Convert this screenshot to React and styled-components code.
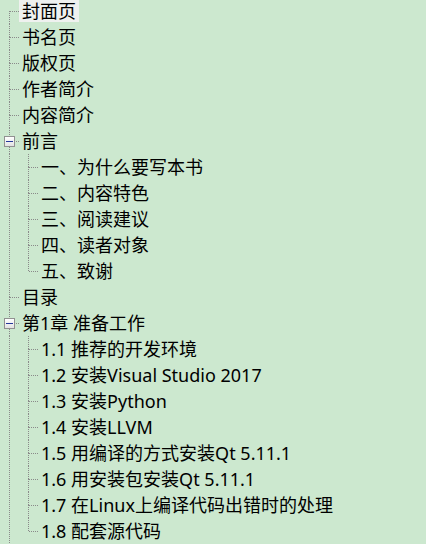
import React from "react";
import styled, { createGlobalStyle, css } from "styled-components";

const Global = createGlobalStyle`
  html, body { margin: 0; padding: 0; overflow: hidden; background: #cce8cf; }
  #root { min-height: 100vh; }
`;

const DOT = "#8a8a8a";
const vLine = `repeating-linear-gradient(to bottom, ${DOT} 0 1px, transparent 1px 2px)`;
const hLine = `repeating-linear-gradient(to right, ${DOT} 0 1px, transparent 1px 2px)`;

const Tree = styled.div`
  margin-top: -2px;
  font-family: "Noto Sans", "Noto Sans CJK SC", sans-serif;
  font-size: 18px;
  color: #000;
`;

const Row = styled.div`
  display: flex;
  align-items: center;
  height: 26px;
`;

const Indent = styled.span`
  flex: none;
  width: 19px;
  height: 100%;
  ${(p) =>
    p.$line &&
    css`
      background-image: ${vLine};
      background-repeat: no-repeat;
      background-size: 1px 100%;
      background-position: 9px 0;
    `}
`;

const connectorBg = ({ $top, $bottom }) => {
  const imgs = [];
  const sizes = [];
  const pos = [];
  if ($top) {
    imgs.push(vLine);
    sizes.push("1px 13px");
    pos.push("9px 0");
  }
  if ($bottom) {
    imgs.push(vLine);
    sizes.push("1px 13px");
    pos.push("9px 13px");
  }
  imgs.push(hLine);
  sizes.push("9px 1px");
  pos.push("10px 13px");
  return css`
    background-image: ${imgs.join(", ")};
    background-size: ${sizes.join(", ")};
    background-position: ${pos.join(", ")};
    background-repeat: no-repeat;
  `;
};

const Connector = styled.span`
  flex: none;
  width: 19px;
  height: 100%;
  display: flex;
  align-items: center;
  padding-left: 4px;
  box-sizing: border-box;
  ${connectorBg}
`;

const ToggleBox = styled.span`
  width: 11px;
  height: 11px;
  box-sizing: border-box;
  border: 1px solid #919191;
  background: linear-gradient(#ffffff, #e2e2e2);
  display: flex;
  align-items: center;
  justify-content: center;
`;

const Minus = styled.span`
  width: 7px;
  height: 1px;
  background: #24389a;
`;

const Label = styled.span`
  display: inline-block;
  height: 22px;
  line-height: 22px;
  padding: 0 3px;
  white-space: nowrap;
  background: ${(p) => (p.$selected ? "#eff1ef" : "transparent")};
`;

const data = [
  { t: "封面页", selected: true },
  { t: "书名页" },
  { t: "版权页" },
  { t: "作者简介" },
  { t: "内容简介" },
  {
    t: "前言",
    children: [
      { t: "一、为什么要写本书" },
      { t: "二、内容特色" },
      { t: "三、阅读建议" },
      { t: "四、读者对象" },
      { t: "五、致谢" },
    ],
  },
  { t: "目录" },
  {
    t: "第1章 准备工作",
    children: [
      { t: "1.1 推荐的开发环境" },
      { t: "1.2 安装Visual Studio 2017" },
      { t: "1.3 安装Python" },
      { t: "1.4 安装LLVM" },
      { t: "1.5 用编译的方式安装Qt 5.11.1" },
      { t: "1.6 用安装包安装Qt 5.11.1" },
      { t: "1.7 在Linux上编译代码出错时的处理" },
      { t: "1.8 配套源代码" },
    ],
  },
];

function renderNodes(nodes, ancestors, isRoot, moreBelow) {
  const out = [];
  nodes.forEach((n, i) => {
    const last = i === nodes.length - 1 && !moreBelow;
    const first = isRoot && i === 0;
    const key = [...ancestors.map((a, k) => k), i, n.t].join("-");
    out.push(
      <Row key={key}>
        {ancestors.map((hasLine, k) => (
          <Indent key={k} $line={hasLine} />
        ))}
        <Connector $top={!first} $bottom={!last}>
          {n.children && (
            <ToggleBox>
              <Minus />
            </ToggleBox>
          )}
        </Connector>
        <Label $selected={n.selected}>{n.t}</Label>
      </Row>
    );
    if (n.children) {
      out.push(...renderNodes(n.children, [...ancestors, !last], false, false));
    }
  });
  return out;
}

export default function App() {
  return (
    <>
      <Global />
      <Tree>{renderNodes(data, [], true, true)}</Tree>
    </>
  );
}
